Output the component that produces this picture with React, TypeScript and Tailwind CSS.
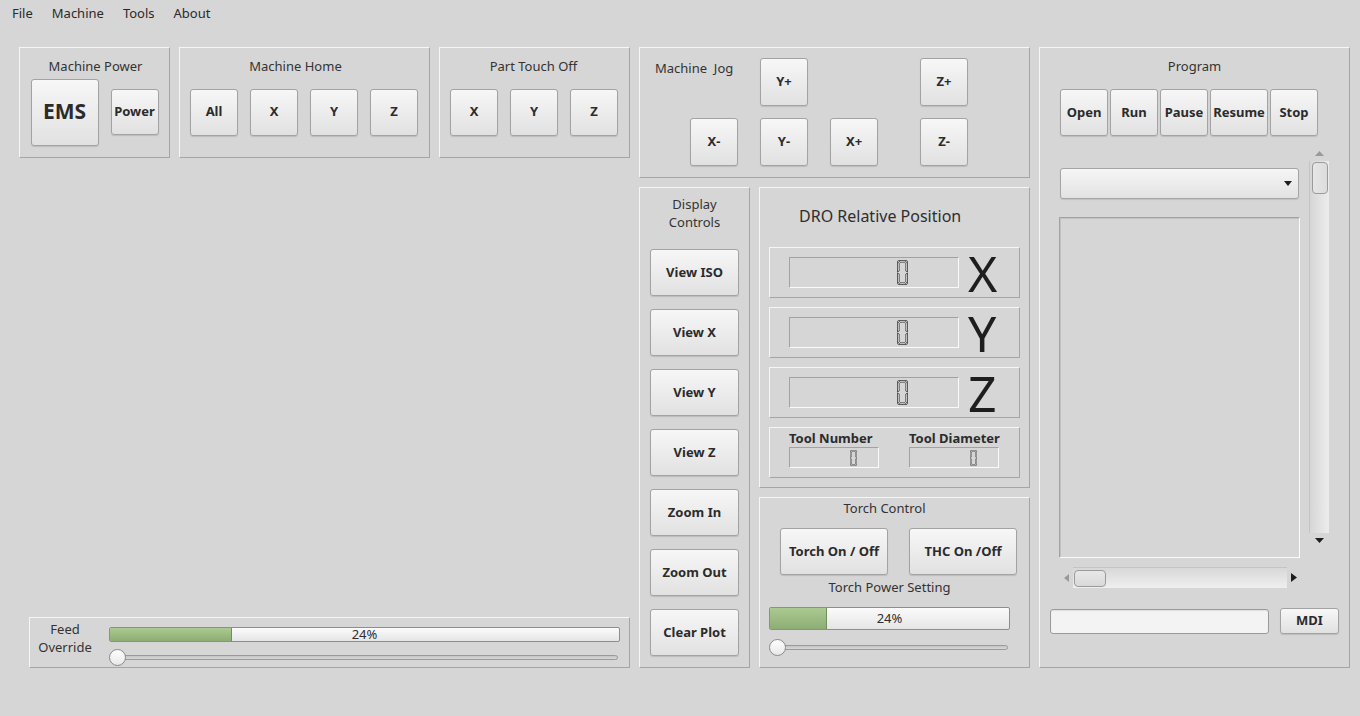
import React from "react";

const raised =
  "border border-t-[#f6f6f6] border-l-[#f6f6f6] border-r-[#a5a5a5] border-b-[#a5a5a5]";
const sunken =
  "border border-t-[#a2a2a2] border-l-[#a2a2a2] border-r-[#fafafa] border-b-[#fafafa]";

const Btn = ({ label, className = "" }: { label: string; className?: string }) => (
  <div
    className={`flex shrink-0 items-center justify-center rounded-[3px] border border-[#a3a3a3] bg-gradient-to-b from-[#f7f7f7] to-[#e1e1e1] font-bold text-[#2b2b2b] shadow-[0_1px_1px_rgba(0,0,0,0.12)] ${className}`}
  >
    {label}
  </div>
);

const Digit = ({ w, h }: { w: number; h: number }) => (
  <svg width={w} height={h} viewBox="0 0 11 25" preserveAspectRatio="none">
    <g fill="#e8e8e8" stroke="#222" strokeWidth="0.7">
      <polygon points="1.4,0.5 9.6,0.5 8,2.2 3,2.2" />
      <polygon points="0.5,1.4 2.2,3 2.2,11 0.5,12" />
      <polygon points="10.5,1.4 10.5,12 8.8,11 8.8,3" />
      <polygon points="0.5,13 2.2,14 2.2,22 0.5,23.6" />
      <polygon points="10.5,13 10.5,23.6 8.8,22 8.8,14" />
      <polygon points="1.4,24.5 3,22.8 8,22.8 9.6,24.5" />
    </g>
  </svg>
);

const Progress = ({ className }: { className: string }) => (
  <div
    className={`relative flex rounded-[2px] border border-[#8e8e8e] bg-gradient-to-b from-[#fbfbfb] to-[#e5e5e5] ${className}`}
  >
    <div
      className="h-full rounded-l-[1px] border-r border-[#6f8f5c] bg-gradient-to-b from-[#abca91] to-[#8cad73]"
      style={{ width: "24%" }}
    />
    <span className="absolute inset-0 flex items-center justify-center text-[13px] leading-none text-[#2e2e2e]">
      24%
    </span>
  </div>
);

const Slider = ({ className }: { className: string }) => (
  <div className={`relative flex h-[17px] items-center ${className}`}>
    <div className="ml-[1px] h-[5px] flex-1 rounded-full border border-[#9a9a9a] bg-gradient-to-b from-[#c4c4c4] to-[#d8d8d8]" />
    <div className="absolute left-0 top-0 h-[17px] w-[17px] rounded-full border border-[#8a8a8a] bg-gradient-to-b from-[#ffffff] to-[#e8e8e8]" />
  </div>
);

const Title = ({ children, className = "" }: { children: React.ReactNode; className?: string }) => (
  <div className={`h-[18px] leading-[18px] text-[13px] text-[#333] ${className}`}>{children}</div>
);

const DroRow = ({ axis }: { axis: string }) => (
  <div className={`ml-[9px] flex h-[51px] w-[251px] items-center ${raised}`}>
    <div className={`ml-[19px] flex h-[31px] w-[170px] items-center justify-end pr-[50px] ${sunken}`}>
      <Digit w={11} h={25} />
    </div>
    <span className="ml-[9px] text-[50px] leading-none text-[#1e1e1e]">{axis}</span>
  </div>
);

const ToolLcd = () => (
  <div className={`flex h-[21px] w-[90px] items-center justify-end pr-[21px] ${sunken}`}>
    <Digit w={7} h={16} />
  </div>
);

export default function App() {
  return (
    <div className="h-[716px] w-[1360px] overflow-hidden bg-[#d6d6d6] font-['Noto_Sans',sans-serif] text-[13px] text-[#2e2e2e]">
      {/* menu */}
      <div className="flex h-[28px] items-center gap-[19px] pl-[12px] text-[13px] text-[#2a2a2a]">
        <span>File</span>
        <span>Machine</span>
        <span>Tools</span>
        <span>About</span>
      </div>

      <div className="flex gap-[9px] pl-[19px] pt-[19px]">
        {/* left column */}
        <div className="flex h-[621px] w-[611px] flex-col justify-between">
          <div className="flex gap-[9px]">
            <div className={`flex h-[111px] w-[151px] flex-col items-center pt-[9px] ${raised}`}>
              <Title className="pl-[2px]">Machine Power</Title>
              <div className="flex h-[74px] items-center gap-[12px]">
                <Btn label="EMS" className="h-[67px] w-[68px] text-[21px]" />
                <Btn label="Power" className="h-[46px] w-[48px] text-[13px]" />
              </div>
            </div>
            <div className={`flex h-[111px] w-[251px] flex-col items-center pt-[9px] ${raised}`}>
              <Title className="pr-[18px]">Machine Home</Title>
              <div className="flex h-[74px] items-center gap-[12px] pr-[1px]">
                <Btn label="All" className="h-[47px] w-[48px] text-[13px]" />
                <Btn label="X" className="h-[47px] w-[48px] text-[13px]" />
                <Btn label="Y" className="h-[47px] w-[48px] text-[13px]" />
                <Btn label="Z" className="h-[47px] w-[48px] text-[13px]" />
              </div>
            </div>
            <div className={`flex h-[111px] w-[191px] flex-col items-center pt-[9px] ${raised}`}>
              <Title className="pr-[2px]">Part Touch Off</Title>
              <div className="flex h-[74px] items-center gap-[12px] pr-[1px]">
                <Btn label="X" className="h-[47px] w-[48px] text-[13px]" />
                <Btn label="Y" className="h-[47px] w-[48px] text-[13px]" />
                <Btn label="Z" className="h-[47px] w-[48px] text-[13px]" />
              </div>
            </div>
          </div>

          {/* feed override */}
          <div className={`ml-[10px] flex h-[51px] w-[601px] ${raised}`}>
            <div className="w-[70px] pt-[2px] text-center text-[13px] leading-[18px] text-[#333]">
              Feed
              <br />
              Override
            </div>
            <div className="ml-[9px] flex flex-col">
              <Progress className="mt-[9px] h-[15px] w-[511px]" />
              <Slider className="mt-[7px] w-[509px]" />
            </div>
          </div>
        </div>

        {/* middle column */}
        <div className="flex w-[391px] flex-col gap-[9px]">
          <div className={`h-[131px] w-[391px] pt-[10px] ${raised}`}>
            <div className="flex items-start pl-[15px]">
              <div className="mt-[1px] w-[105px] leading-[18px] text-[#333]">Machine&nbsp; Jog</div>
              <Btn label="Y+" className="h-[48px] w-[48px] text-[13px]" />
              <div className="w-[112px]" />
              <Btn label="Z+" className="h-[48px] w-[48px] text-[13px]" />
            </div>
            <div className="mt-[12px] flex pl-[50px]">
              <Btn label="X-" className="h-[48px] w-[48px] text-[13px]" />
              <Btn label="Y-" className="ml-[22px] h-[48px] w-[48px] text-[13px]" />
              <Btn label="X+" className="ml-[22px] h-[48px] w-[48px] text-[13px]" />
              <Btn label="Z-" className="ml-[42px] h-[48px] w-[48px] text-[13px]" />
            </div>
          </div>

          <div className="flex gap-[9px]">
            {/* display controls */}
            <div className={`flex h-[481px] w-[111px] flex-col pt-[7px] ${raised}`}>
              <div className="text-center leading-[18px] text-[#333]">
                Display
                <br />
                Controls
              </div>
              <div className="ml-[10px] mt-[18px] flex flex-col gap-[13px]">
                {["View ISO", "View X", "View Y", "View Z", "Zoom In", "Zoom Out", "Clear Plot"].map((l) => (
                  <Btn key={l} label={l} className="h-[47px] w-[89px] text-[13px]" />
                ))}
              </div>
            </div>

            <div className="flex w-[271px] flex-col gap-[9px]">
              {/* DRO */}
              <div className={`flex h-[301px] w-[271px] flex-col pt-[17px] ${raised}`}>
                <div className="ml-[39px] h-[22px] text-[16px] leading-[22px] text-[#2e2e2e]">
                  DRO Relative Position
                </div>
                <div className="mt-[20px] flex flex-col gap-[9px]">
                  <DroRow axis="X" />
                  <DroRow axis="Y" />
                  <DroRow axis="Z" />
                  <div className={`ml-[9px] flex h-[51px] w-[251px] pl-[19px] pt-[1px] ${raised}`}>
                    <div className="w-[120px]">
                      <div className="h-[18px] font-bold leading-[18px] text-[#2b2b2b]">Tool Number</div>
                      <ToolLcd />
                    </div>
                    <div>
                      <div className="h-[18px] font-bold leading-[18px] text-[#2b2b2b]">Tool Diameter</div>
                      <ToolLcd />
                    </div>
                  </div>
                </div>
              </div>

              {/* torch */}
              <div className={`flex h-[171px] w-[271px] flex-col pt-[1px] ${raised}`}>
                <Title className="pr-[20px] text-center">Torch Control</Title>
                <div className="ml-[20px] mt-[11px] flex gap-[21px]">
                  <Btn label="Torch On / Off" className="h-[47px] w-[108px] text-[13px]" />
                  <Btn label="THC On /Off" className="h-[47px] w-[108px] text-[13px]" />
                </div>
                <div className="ml-[9px] mt-[3px] flex w-[241px] flex-col">
                  <Title className="text-center">Torch Power Setting</Title>
                  <Progress className="mt-[11px] h-[23px] w-[241px]" />
                  <Slider className="mt-[9px] w-[239px]" />
                </div>
              </div>
            </div>
          </div>
        </div>

        {/* program */}
        <div className={`flex h-[621px] w-[311px] flex-col pt-[9px] ${raised}`}>
          <Title className="text-center">Program</Title>
          <div className="mt-[14px] flex gap-[2px] pl-[20px]">
            <Btn label="Open" className="h-[47px] w-[48px] text-[13px]" />
            <Btn label="Run" className="h-[47px] w-[48px] text-[13px]" />
            <Btn label="Pause" className="h-[47px] w-[48px] text-[13px]" />
            <Btn label="Resume" className="h-[47px] w-[58px] text-[13px]" />
            <Btn label="Stop" className="h-[47px] w-[48px] text-[13px]" />
          </div>

          <div className="flex pl-[19px]">
            <div className="flex w-[241px] flex-col">
              <div className="ml-[1px] mt-[32px] flex h-[31px] w-[239px] items-center justify-end rounded-[3px] border border-[#a5a5a5] bg-gradient-to-b from-[#f6f6f6] to-[#e2e2e2] pr-[6px] shadow-[0_1px_1px_rgba(0,0,0,0.1)]">
                <svg width="8" height="5" viewBox="0 0 8 5">
                  <polygon points="0,0 8,0 4,5" fill="#1e1e1e" />
                </svg>
              </div>
              <div className={`mt-[18px] h-[341px] w-[241px] shadow-[inset_1px_1px_0_#c2c2c2] ${sunken}`} />
              <div className="mt-[9px] flex h-[21px] items-center">
                <div className="flex w-[14px] justify-center">
                  <svg width="5" height="8" viewBox="0 0 5 8">
                    <polygon points="5,0 5,8 0,4" fill="#9a9a9a" />
                  </svg>
                </div>
                <div className="flex h-[21px] w-[214px] items-center border-t border-[#c4c4c4] bg-gradient-to-b from-[#d8d8d8] to-[#efefef] pl-[1px]">
                  <div className="h-[17px] w-[32px] rounded-[4px] border border-[#9a9a9a] bg-gradient-to-b from-[#e8e8e8] to-[#d9d9d9]" />
                </div>
                <div className="flex w-[13px] justify-center">
                  <svg width="6" height="9" viewBox="0 0 6 9">
                    <polygon points="0,0 6,4.5 0,9" fill="#1e1e1e" />
                  </svg>
                </div>
              </div>
            </div>
            <div className="ml-[9px] mt-[10px] flex h-[402px] w-[20px] flex-col items-center">
              <div className="flex h-[15px] items-center">
                <svg width="9" height="5" viewBox="0 0 9 5">
                  <polygon points="0,5 9,5 4.5,0" fill="#9a9a9a" />
                </svg>
              </div>
              <div className="h-[372px] w-[20px] border-l border-[#c4c4c4] bg-gradient-to-r from-[#d6d6d6] to-[#ededed] pt-[1px]">
                <div className="mx-auto h-[32px] w-[16px] rounded-[4px] border border-[#9a9a9a] bg-gradient-to-r from-[#e6e6e6] to-[#dcdcdc]" />
              </div>
              <div className="flex h-[15px] items-center">
                <svg width="9" height="5" viewBox="0 0 9 5">
                  <polygon points="0,0 9,0 4.5,5" fill="#1e1e1e" />
                </svg>
              </div>
            </div>
          </div>

          <div className="mt-[20px] flex items-center pl-[10px]">
            <div className="h-[25px] w-[219px] rounded-[3px] border border-[#9a9a9a] bg-[#f3f3f3] shadow-[inset_0_1px_1px_rgba(0,0,0,0.08)]" />
            <Btn label="MDI" className="ml-[11px] h-[26px] w-[59px] text-[13px]" />
          </div>
        </div>
      </div>
    </div>
  );
}
